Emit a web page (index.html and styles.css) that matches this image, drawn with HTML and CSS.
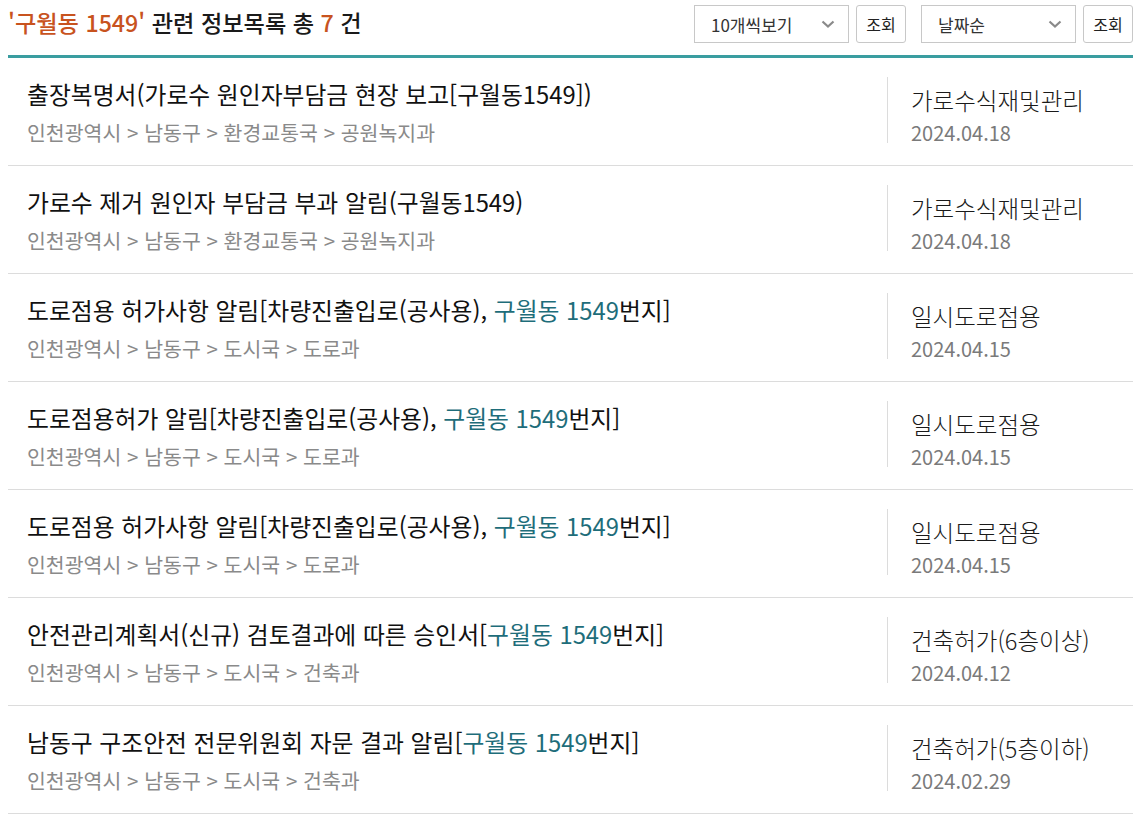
FILE: index.html
```html
<!DOCTYPE html>
<html lang="ko">
<head>
<meta charset="utf-8">
<link rel="stylesheet" href="styles.css">
</head>
<body>
<div class="wrap">
  <div class="head">
    <h2 class="head-title"><span class="hl-o">'구월동 1549'</span> 관련 정보목록 총 <span class="hl-o">7</span> 건</h2>
    <div class="controls">
      <div class="select w1"><span>10개씩보기</span><svg class="chev" viewBox="0 0 14 9" width="14" height="9"><path d="M1.5 1.5 L7 6.5 L12.5 1.5" fill="none" stroke="#8a8a8a" stroke-width="2.2"/></svg></div>
      <button class="btn">조회</button>
      <div class="select w2"><span>날짜순</span><svg class="chev" viewBox="0 0 14 9" width="14" height="9"><path d="M1.5 1.5 L7 6.5 L12.5 1.5" fill="none" stroke="#8a8a8a" stroke-width="2.2"/></svg></div>
      <button class="btn">조회</button>
    </div>
  </div>
  <ul class="list">
    <li class="row">
      <div class="main">
        <div class="title">출장복명서(가로수 원인자부담금 현장 보고[구월동1549])</div>
        <div class="path">인천광역시 &gt; 남동구 &gt; 환경교통국 &gt; 공원녹지과</div>
      </div>
      <div class="side">
        <div class="cat">가로수식재및관리</div>
        <div class="date">2024.04.18</div>
      </div>
    </li>
    <li class="row">
      <div class="main">
        <div class="title">가로수 제거 원인자 부담금 부과 알림(구월동1549)</div>
        <div class="path">인천광역시 &gt; 남동구 &gt; 환경교통국 &gt; 공원녹지과</div>
      </div>
      <div class="side">
        <div class="cat">가로수식재및관리</div>
        <div class="date">2024.04.18</div>
      </div>
    </li>
    <li class="row">
      <div class="main">
        <div class="title">도로점용 허가사항 알림[차량진출입로(공사용), <span class="hl-t">구월동 1549</span>번지]</div>
        <div class="path">인천광역시 &gt; 남동구 &gt; 도시국 &gt; 도로과</div>
      </div>
      <div class="side">
        <div class="cat">일시도로점용</div>
        <div class="date">2024.04.15</div>
      </div>
    </li>
    <li class="row">
      <div class="main">
        <div class="title">도로점용허가 알림[차량진출입로(공사용), <span class="hl-t">구월동 1549</span>번지]</div>
        <div class="path">인천광역시 &gt; 남동구 &gt; 도시국 &gt; 도로과</div>
      </div>
      <div class="side">
        <div class="cat">일시도로점용</div>
        <div class="date">2024.04.15</div>
      </div>
    </li>
    <li class="row">
      <div class="main">
        <div class="title">도로점용 허가사항 알림[차량진출입로(공사용), <span class="hl-t">구월동 1549</span>번지]</div>
        <div class="path">인천광역시 &gt; 남동구 &gt; 도시국 &gt; 도로과</div>
      </div>
      <div class="side">
        <div class="cat">일시도로점용</div>
        <div class="date">2024.04.15</div>
      </div>
    </li>
    <li class="row">
      <div class="main">
        <div class="title">안전관리계획서(신규) 검토결과에 따른 승인서[<span class="hl-t">구월동 1549</span>번지]</div>
        <div class="path">인천광역시 &gt; 남동구 &gt; 도시국 &gt; 건축과</div>
      </div>
      <div class="side">
        <div class="cat">건축허가(6층이상)</div>
        <div class="date">2024.04.12</div>
      </div>
    </li>
    <li class="row">
      <div class="main">
        <div class="title">남동구 구조안전 전문위원회 자문 결과 알림[<span class="hl-t">구월동 1549</span>번지]</div>
        <div class="path">인천광역시 &gt; 남동구 &gt; 도시국 &gt; 건축과</div>
      </div>
      <div class="side">
        <div class="cat">건축허가(5층이하)</div>
        <div class="date">2024.02.29</div>
      </div>
    </li>
  </ul>
</div>
</body>
</html>
```

FILE: styles.css
```css
* { box-sizing: border-box; }
html, body { margin: 0; padding: 0; background: #fff; }
body {
  font-family: "Noto Sans CJK KR", "Noto Sans", sans-serif;
  color: #111;
}
.wrap {
  width: 1125px;
  margin-left: 8px;
}
.head {
  height: 58px;
  display: flex;
  align-items: flex-start;
  justify-content: space-between;
  border-bottom: 3px solid #3a9da0;
}
.head-title {
  margin: 6px 0 0 0;
  font-size: 23.2px;
  font-weight: 500;
  line-height: 32px;
  color: #1a1a1a;
}
.hl-o { color: #c8531e; }
.controls {
  display: flex;
  align-items: center;
  margin-top: 5px;
}
.select {
  height: 38px;
  width: 155px;
  border: 1px solid #c8c8c8;
  display: flex;
  align-items: center;
  justify-content: space-between;
  padding: 0 13px 0 16px;
  font-size: 17px;
  color: #333;
}
.select.w2 { margin-left: 15px; }
.btn {
  margin-left: 7px;
  height: 38px;
  width: 50px;
  border: 1px solid #c8c8c8;
  border-radius: 3px;
  background: #fff;
  font-family: inherit;
  font-size: 16px;
  color: #222;
  padding: 0;
}
.list {
  list-style: none;
  margin: 0;
  padding: 0;
}
.row {
  height: 108px;
  display: flex;
  align-items: flex-start;
  border-bottom: 1px solid #dcdcdc;
}
.main {
  flex: 1;
  padding: 20px 0 0 19px;
}
.title {
  font-size: 23.8px;
  line-height: 32px;
  color: #111;
}
.hl-t { color: #1e6d7a; }
.path {
  margin-top: 8px;
  font-size: 20.5px;
  line-height: 28px;
  color: #8a8a8a;
}
.side {
  width: 246px;
  margin-top: 19px;
  height: 66px;
  border-left: 1px solid #dcdcdc;
  padding: 7px 0 0 23px;
}
.cat {
  font-size: 23.5px;
  font-weight: 300;
  line-height: 32px;
  color: #1a1a1a;
}
.date {
  margin-top: 4px;
  font-size: 20px;
  line-height: 26px;
  color: #7a7a7a;
}
```
